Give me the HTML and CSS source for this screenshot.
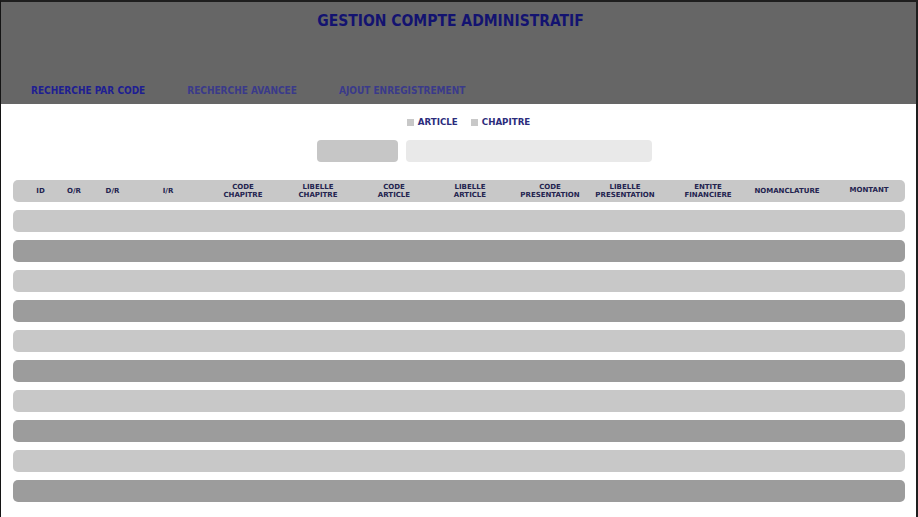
FILE: index.html
```html
<!DOCTYPE html>
<html lang="fr">
<head>
<meta charset="utf-8">
<title>Gestion Compte Administratif</title>
<link rel="stylesheet" href="styles.css">
</head>
<body>
<div class="frame">
  <header class="top">
    <h1 class="title">GESTION COMPTE ADMINISTRATIF</h1>
    <nav class="nav">
      <a class="nav-item active">RECHERCHE PAR CODE</a>
      <a class="nav-item">RECHERCHE AVANCEE</a>
      <a class="nav-item">AJOUT ENREGISTREMENT</a>
    </nav>
  </header>
  <main class="content">
    <div class="radios">
      <label class="radio"><span class="box"></span>ARTICLE</label>
      <label class="radio"><span class="box"></span>CHAPITRE</label>
    </div>
    <div class="search">
      <div class="btn"></div>
      <div class="field"></div>
    </div>
    <div class="table">
      <div class="thead">
        <div class="th">ID</div>
        <div class="th">O/R</div>
        <div class="th">D/R</div>
        <div class="th">I/R</div>
        <div class="th">CODE<br>CHAPITRE</div>
        <div class="th">LIBELLE<br>CHAPITRE</div>
        <div class="th">CODE<br>ARTICLE</div>
        <div class="th">LIBELLE<br>ARTICLE</div>
        <div class="th">CODE<br>PRESENTATION</div>
        <div class="th">LIBELLE<br>PRESENTATION</div>
        <div class="th">ENTITE<br>FINANCIERE</div>
        <div class="th">NOMANCLATURE</div>
        <div class="th th-up">MONTANT</div>
      </div>
      <div class="row light"></div>
      <div class="row dark"></div>
      <div class="row light"></div>
      <div class="row dark"></div>
      <div class="row light"></div>
      <div class="row dark"></div>
      <div class="row light"></div>
      <div class="row dark"></div>
      <div class="row light"></div>
      <div class="row dark"></div>
    </div>
  </main>
</div>
</body>
</html>
```
FILE: styles.css
```css
html, body {
  margin: 0;
  padding: 0;
  overflow: hidden;
  background: #ffffff;
}

.frame {
  width: 918px;
  height: 517px;
  box-sizing: border-box;
  border-top: 2px solid #1e1e1e;
  border-left: 1px solid #141414;
  border-right: 2px solid #1e1e1e;
  overflow: hidden;
  font-family: "DejaVu Sans", Verdana, sans-serif;
}

.top {
  height: 102px;
  background: #666666;
  display: flex;
  flex-direction: column;
}

.title {
  margin: 0;
  padding: 10px 16px 0 0;
  text-align: center;
  font-family: "DejaVu Sans Condensed", "DejaVu Sans", sans-serif;
  font-weight: bold;
  font-size: 15.5px;
  line-height: 19px;
  color: #131370;
}

.nav {
  margin-top: auto;
  display: flex;
  gap: 42px;
  padding: 0 0 7px 30px;
}

.nav-item {
  font-family: "DejaVu Sans Condensed", "DejaVu Sans", sans-serif;
  font-weight: bold;
  font-size: 10px;
  line-height: 12px;
  color: #3a3a8a;
}

.nav-item.active {
  color: #1e1e92;
}

.content {
  padding: 13px 11px 0 12px;
}

.radios {
  display: flex;
  justify-content: center;
  gap: 13px;
  padding-left: 19px;
}

.radio {
  display: flex;
  align-items: center;
  gap: 4px;
  font-weight: bold;
  font-size: 8.7px;
  line-height: 10px;
  color: #2c2c7c;
}

.box {
  width: 7px;
  height: 7px;
  background: #c8c8c8;
}

.search {
  display: flex;
  justify-content: center;
  gap: 8px;
  margin-top: 13px;
  padding-left: 50px;
}

.btn {
  width: 81px;
  height: 22px;
  border-radius: 4px;
  background: #c6c6c6;
}

.field {
  width: 246px;
  height: 22px;
  border-radius: 4px;
  background: #e9e9e9;
}

.table {
  margin-top: 18px;
  display: flex;
  flex-direction: column;
  gap: 8px;
}

.thead {
  height: 22px;
  border-radius: 5px;
  background: #c8c8c8;
  display: grid;
  grid-template-columns: 41px 26px 51px 60px 90px 60px 92px 60px 100px 50px 116px 42px 122px;
  padding-left: 7px;
  overflow: hidden;
}

.th {
  display: flex;
  align-items: center;
  justify-content: center;
  text-align: center;
  white-space: nowrap;
  font-weight: bold;
  font-size: 7px;
  line-height: 8px;
  color: #23234f;
}

.th-up {
  padding-bottom: 2px;
}

.row {
  height: 22px;
  border-radius: 5px;
}

.row.light {
  background: #c8c8c8;
}

.row.dark {
  background: #9c9c9c;
}
```
